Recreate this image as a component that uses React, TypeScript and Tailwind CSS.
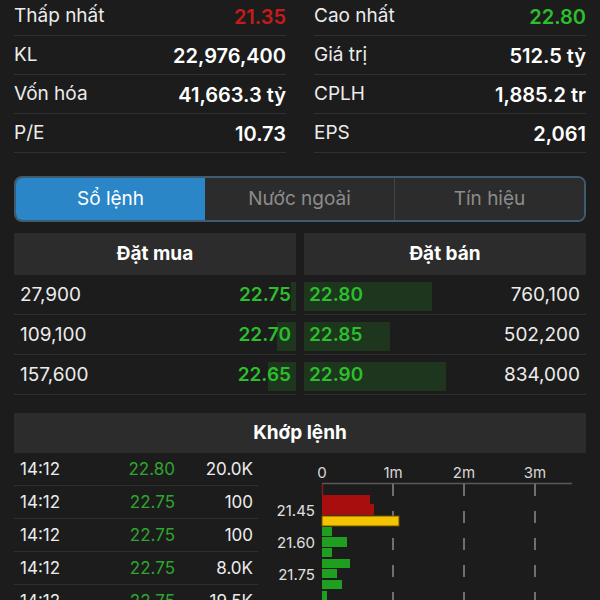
import React from "react";

const stats: [string, string, string?][][] = [
  [["Thấp nhất", "21.35", "red"], ["Cao nhất", "22.80", "green"]],
  [["KL", "22,976,400"], ["Giá trị", "512.5 tỷ"]],
  [["Vốn hóa", "41,663.3 tỷ"], ["CPLH", "1,885.2 tr"]],
  [["P/E", "10.73"], ["EPS", "2,061"]],
];

const buys = [
  { qty: "27,900", price: "22.75", bar: 5 },
  { qty: "109,100", price: "22.70", bar: 19 },
  { qty: "157,600", price: "22.65", bar: 28 },
];

const sells = [
  { qty: "760,100", price: "22.80", bar: 128 },
  { qty: "502,200", price: "22.85", bar: 86 },
  { qty: "834,000", price: "22.90", bar: 142 },
];

const trades = [
  { time: "14:12", price: "22.80", vol: "20.0K" },
  { time: "14:12", price: "22.75", vol: "100" },
  { time: "14:12", price: "22.75", vol: "100" },
  { time: "14:12", price: "22.75", vol: "8.0K" },
  { time: "14:12", price: "22.75", vol: "19.5K" },
];

const bars = [
  { y: 42, h: 9, w: 48, c: "#a80e0e" },
  { y: 51, h: 11, w: 52, c: "#a80e0e" },
  { y: 63, h: 10, w: 77, c: "#f5c400" },
  { y: 74, h: 9, w: 10, c: "#1f9f1f" },
  { y: 84, h: 10, w: 25, c: "#1f9f1f" },
  { y: 95, h: 9, w: 10, c: "#1f9f1f" },
  { y: 106, h: 9, w: 28, c: "#1f9f1f" },
  { y: 116, h: 9, w: 15, c: "#1f9f1f" },
  { y: 127, h: 9, w: 20, c: "#1f9f1f" },
  { y: 138, h: 9, w: 5, c: "#1f9f1f" },
];

function VolumeChart() {
  return (
    <svg width="328" height="148" className="block">
      {["0", "1m", "2m", "3m"].map((t, i) => (
        <text
          key={t}
          x={64 + i * 71}
          y={25}
          fill="#d8d8d8"
          fontSize="15"
          textAnchor="middle"
          fontFamily="Inter, sans-serif"
        >
          {t}
        </text>
      ))}
      <line x1="64" y1="30.5" x2="314" y2="30.5" stroke="#5a5a5a" strokeWidth="1.5" />
      {[135, 206, 277].map((x) => (
        <line
          key={x}
          x1={x}
          y1={31}
          x2={x}
          y2={148}
          stroke="#8a8a8a"
          strokeWidth="1.5"
          strokeDasharray="12 15"
        />
      ))}
      <line x1="64.5" y1="31" x2="64.5" y2="42" stroke="#8a1a1a" strokeWidth="1.5" />
      {bars.map((b, i) => (
        <rect
          key={i}
          x={64}
          y={b.y}
          width={b.w}
          height={b.h}
          fill={b.c}
          stroke={b.c === "#f5c400" ? "#6b5200" : "none"}
          strokeWidth="1"
        />
      ))}
      {[
        ["21.45", 58],
        ["21.60", 90],
        ["21.75", 122],
      ].map(([t, y]) => (
        <text
          key={t}
          x={57}
          y={(y as number) + 5}
          fill="#e0e0e0"
          fontSize="15"
          textAnchor="end"
          fontFamily="Inter, sans-serif"
        >
          {t}
        </text>
      ))}
    </svg>
  );
}

export default function App() {
  return (
    <div className="w-[600px] h-[600px] overflow-hidden bg-[#1c1c1c] px-[14px] font-['Inter',sans-serif] text-white">
      {/* Stats */}
      <div className="-mt-[3px] grid grid-cols-2 gap-x-[28px]">
        {stats.map((row, ri) =>
          row.map(([label, value, tone], ci) => (
            <div
              key={`${ri}-${ci}`}
              className="flex h-[39px] items-center justify-between border-b border-[#303030] pt-[1px]"
            >
              <span className="text-[19px] text-[#ececec]">{label}</span>
              <span
                className={
                  tone === "red"
                    ? "text-[20px] font-semibold text-[#c81a1a]"
                    : tone === "green"
                      ? "text-[20px] font-semibold text-[#2cbf2c]"
                      : "text-[20px] font-semibold text-white"
                }
              >
                {value}
              </span>
            </div>
          ))
        )}
      </div>

      {/* Tabs */}
      <div className="mt-[23px] flex h-[46px] overflow-hidden rounded-[8px] border-2 border-[#3f5b70] text-[19px]">
        <div className="flex flex-1 items-center justify-center bg-[#2b86c8] text-white">Sổ lệnh</div>
        <div className="flex flex-1 items-center justify-center border-r border-[#444] bg-[#2c2c2c] text-[#8c8c8c]">
          Nước ngoài
        </div>
        <div className="flex flex-1 items-center justify-center bg-[#2c2c2c] text-[#8c8c8c]">Tín hiệu</div>
      </div>

      {/* Order book */}
      <div className="mt-[11px] grid grid-cols-2 gap-x-[8px]">
        <div>
          <div className="flex h-[42px] items-center justify-center bg-[#2c2c2c] text-[19px] font-bold">
            Đặt mua
          </div>
          {buys.map((b) => (
            <div
              key={b.price}
              className="relative flex h-[40px] items-center justify-between border-b border-[#2f2f2f] pl-[6px] pr-[5px] pt-[2px] text-[19px]"
            >
              <div className="absolute right-0 top-[7px] h-[29px] bg-[#1d361d]" style={{ width: b.bar }} />
              <span className="relative text-[#ececec]">{b.qty}</span>
              <span className="relative font-semibold text-[#2cbf2c]">{b.price}</span>
            </div>
          ))}
        </div>
        <div>
          <div className="flex h-[42px] items-center justify-center bg-[#2c2c2c] text-[19px] font-bold">
            Đặt bán
          </div>
          {sells.map((s) => (
            <div
              key={s.price}
              className="relative flex h-[40px] items-center justify-between border-b border-[#2f2f2f] pl-[5px] pr-[6px] pt-[2px] text-[19px]"
            >
              <div className="absolute left-0 top-[7px] h-[29px] bg-[#1d361d]" style={{ width: s.bar }} />
              <span className="relative font-semibold text-[#2cbf2c]">{s.price}</span>
              <span className="relative text-[#ececec]">{s.qty}</span>
            </div>
          ))}
        </div>
      </div>

      {/* Matched orders */}
      <div className="mt-[18px] flex h-[40px] items-center justify-center bg-[#2c2c2c] text-[19px] font-bold">
        Khớp lệnh
      </div>
      <div className="flex">
        <div className="w-[244px]">
          {trades.map((t, i) => (
            <div
              key={i}
              className="flex h-[33px] items-center border-b border-[#2f2f2f] pl-[6px] pr-[5px] pt-[2px] text-[17px]"
            >
              <span className="w-[100px] text-[#ececec]">{t.time}</span>
              <span className="w-[55px] text-right text-[#2ea62e]">{t.price}</span>
              <span className="flex-1 text-right text-[#ececec]">{t.vol}</span>
            </div>
          ))}
        </div>
        <VolumeChart />
      </div>
    </div>
  );
}
